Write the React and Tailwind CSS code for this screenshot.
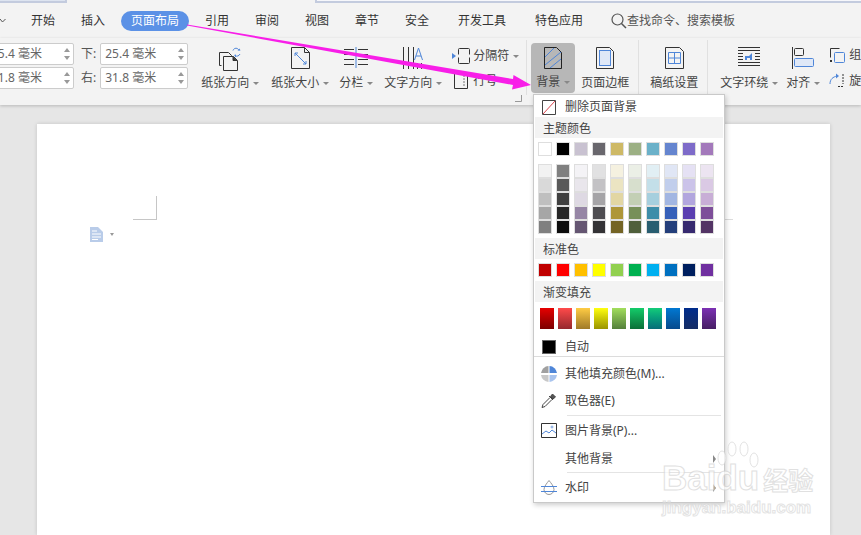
import React from "react";

const THEME = ["#ffffff", "#000000", "#c9c2d1", "#69676d", "#ceb966", "#9cb084", "#6bb1c9", "#6585cf", "#7e6bc9", "#a379bb"];
const SHADES = [
  ["#f2f2f2", "#d9d9d9", "#bfbfbf", "#a6a6a6", "#808080"],
  ["#808080", "#595959", "#404040", "#262626", "#0d0d0d"],
  ["#f4f3f6", "#e9e6ec", "#ded9e3", "#9686a5", "#655672"],
  ["#e1e1e2", "#c3c2c5", "#a5a4a7", "#4e4d51", "#343336"],
  ["#f5f1e0", "#ebe4c2", "#e2d6a3", "#ae9638", "#746425"],
  ["#ebefe6", "#d7dfcd", "#c3cfb5", "#779059", "#4f5f3b"],
  ["#e1eff4", "#c3dfe9", "#a6cfde", "#3d8da9", "#295e71"],
  ["#e0e6f5", "#c1ceec", "#a2b6e2", "#3660b9", "#243f7b"],
  ["#e5e1f4", "#cbc3e9", "#b2a6de", "#5a3eb0", "#372a70"],
  ["#ece4f1", "#dac9e4", "#c8aed6", "#7d4e99", "#533465"],
];
const STANDARD = ["#c00000", "#ff0000", "#ffc000", "#ffff00", "#92d050", "#00b050", "#00b0f0", "#0070c0", "#002060", "#7030a0"];
const GRADIENTS = [
  "from-[#e60000] to-[#7d0000]",
  "from-[#ff4a4a] to-[#96282d]",
  "from-[#ffcc44] to-[#a07a28]",
  "from-[#ffff10] to-[#9a9400]",
  "from-[#a2de5c] to-[#55803c]",
  "from-[#14cc6a] to-[#0a7038]",
  "from-[#14cc78] to-[#086c78]",
  "from-[#0078d2] to-[#064a8c]",
  "from-[#002c8c] to-[#142c64]",
  "from-[#7c30b4] to-[#461e64]",
];
const TABS = ["引用", "审阅", "视图", "章节", "安全"];

function Caret() {
  return <span className="inline-block ml-[4px] align-middle w-0 h-0 border-x-[3px] border-x-transparent border-t-[3px] border-t-[#888]" />;
}

function Spinner() {
  return (
    <span className="flex flex-col gap-[4px] mr-[3px] ml-auto">
      <span className="w-0 h-0 border-x-[3px] border-x-transparent border-b-[4px] border-b-[#999]" />
      <span className="w-0 h-0 border-x-[3px] border-x-transparent border-t-[4px] border-t-[#999]" />
    </span>
  );
}

function MarginInput({ value }) {
  return (
    <div className="w-[88px] h-[22px] bg-white border border-[#ccc] rounded-[2px] flex items-center text-[12px] text-[#666]">
      <span className="pl-[4px] whitespace-pre">{value}</span>
      <Spinner />
    </div>
  );
}

function OrientationIcon() {
  return (
    <svg width="24" height="24" viewBox="0 0 24 24" fill="none">
      <path d="M1.500 5.500h9l3 3v1" stroke="#333" />
      <path d="M1.500 5.500v13h2" stroke="#333" />
      <path d="M5.500 9.500h10l4 4v10h-14z" fill="#f3f3f3" stroke="#333" />
      <path d="M15 9.500v4h4" stroke="#333" fill="#333" />
      <path d="M15 3.500c1-3 5-3 6 0M22 7c-1 2-3 2.500-5 2" stroke="#4f86d8" />
      <path d="M19.500 3.500h3l-1-2zM16 8l2 2.500v-3z" fill="#4f86d8" />
    </svg>
  );
}

function PaperSizeIcon() {
  return (
    <svg width="19" height="22" viewBox="0 0 19 22" fill="none">
      <path d="M0.500 0.500h13l5 5v16h-18z" stroke="#333" />
      <path d="M13.500 0.500v5h5" stroke="#333" />
      <path d="M4 6l11 11M4 6h3M4 6v3M15 17h-3M15 17v-3" stroke="#4f86d8" />
    </svg>
  );
}

function ColumnsIcon() {
  return (
    <svg width="24" height="21" viewBox="0 0 24 21" fill="none">
      <path d="M0 2.500h10M0 7.500h10M0 12.500h10M0 17.500h10M14 2.500h10M14 7.500h10M14 12.500h10M14 17.500h10" stroke="#333" />
      <path d="M12 0v21" stroke="#4f86d8" />
    </svg>
  );
}

function TextDirectionIcon() {
  return (
    <svg width="21" height="22" viewBox="0 0 21 22" fill="none">
      <path d="M0.500 0v22M5.500 0v22M10.500 0v22" stroke="#333" />
      <path d="M11.500 13l4-12 4 12M13 9h5" stroke="#4f86d8" />
      <path d="M14.500 16v6M18.500 16v6" stroke="#333" />
    </svg>
  );
}

function BreakIcon() {
  return (
    <svg width="20" height="18" viewBox="0 0 20 18" fill="none">
      <path d="M7.500 7.500v-5a1 1 0 0 1 1-1h9a1 1 0 0 1 1 1v5M7.500 10.500v5a1 1 0 0 0 1 1h9a1 1 0 0 0 1-1v-5" stroke="#333" />
      <path d="M1 6v6l4-3z" fill="#4f86d8" />
    </svg>
  );
}

function LineNumberIcon() {
  return (
    <svg width="14" height="16" viewBox="0 0 14 16" fill="none">
      <path d="M0.500 0.500h13v15h-13z" stroke="#333" />
      <path d="M9 3h2M9 6h2M9 9h2M9 12h2" stroke="#777" />
    </svg>
  );
}

function BackgroundIcon() {
  return (
    <svg width="18" height="22" viewBox="0 0 18 22" fill="none">
      <path d="M0.500 0.500h12l5 5v16h-17z" fill="#b7b7b7" stroke="#222" />
      <path d="M1 10L10 1M1 18L17 5M6 21L17 12" stroke="#4f86d8" />
    </svg>
  );
}

function PageBorderIcon() {
  return (
    <svg width="18" height="22" viewBox="0 0 18 22" fill="none">
      <path d="M0.500 0.500h13l4 4v17h-17z" stroke="#333" />
      <rect x="3.500" y="3.500" width="11" height="15" fill="#dfe8f7" stroke="#4f86d8" />
    </svg>
  );
}

function ManuscriptIcon() {
  return (
    <svg width="19" height="22" viewBox="0 0 19 22" fill="none">
      <path d="M0.500 0.500h14l4 4v17h-18z" stroke="#333" />
      <path d="M3.500 5.500h12v11h-12zM3.500 11h12M9.500 5.500v11" stroke="#4f86d8" />
    </svg>
  );
}

function WrapIcon() {
  return (
    <svg width="22" height="20" viewBox="0 0 22 20" fill="none">
      <path d="M0 0.500h22M0 3.500h22M0 6.500h5M17 6.500h5M0 9.500h5M17 9.500h5M0 12.500h5M17 12.500h5M0 15.500h22M0 18.500h22" stroke="#333" />
      <path d="M7 13V9h4l3-3v7h-2v-2H9v2z" fill="#4f86d8" />
    </svg>
  );
}

function AlignIcon() {
  return (
    <svg width="22" height="22" viewBox="0 0 22 22" fill="none">
      <path d="M0.500 0v22" stroke="#333" />
      <rect x="2.500" y="1.500" width="9" height="7" rx="1" stroke="#333" />
      <rect x="2.500" y="11.500" width="19" height="8" rx="1" fill="#dfe8f7" stroke="#4f86d8" />
    </svg>
  );
}

function GroupIcon() {
  return (
    <svg width="16" height="16" viewBox="0 0 16 16" fill="none">
      <path d="M1.500 10.500v-9h9" stroke="#333" />
      <rect x="5.500" y="5.500" width="10" height="10" rx="1" stroke="#4f86d8" />
      <rect x="1" y="13" width="2" height="2" fill="#333" />
    </svg>
  );
}

function RotateIcon() {
  return (
    <svg width="16" height="16" viewBox="0 0 16 16" fill="none">
      <path d="M14 1v10M9 13.500h6" stroke="#333" strokeDasharray="2 1" />
      <path d="M1 11c0-5 3-7 7-8" stroke="#4f86d8" />
      <path d="M7 0.500l3 2.500-3 2.500z" fill="#4f86d8" />
    </svg>
  );
}

function NoFillIcon() {
  return (
    <svg width="14" height="15" viewBox="0 0 14 15" fill="none">
      <path d="M0.500 0.500h13v14h-13z" stroke="#444" />
      <path d="M1 14L13 1" stroke="#d9434e" />
    </svg>
  );
}

function PaletteIcon() {
  return (
    <svg width="16" height="16" viewBox="0 0 16 16">
      <path d="M8.500 0a8 8 0 0 1 7.500 7H8.500z" fill="#4f86d8" />
      <path d="M7.500 0v7H0a8 8 0 0 1 7.500-7z" fill="#a0a0a0" />
      <path d="M0 9h7.500v7A8 8 0 0 1 0 9z" fill="#c8c8c8" />
      <path d="M8.500 9H16a8 8 0 0 1-7.500 7z" fill="#a9c4ee" />
    </svg>
  );
}

function DropperIcon() {
  return (
    <svg width="15" height="15" viewBox="0 0 15 15" fill="none">
      <path d="M9.500 3.500l2-2.500 3 3-2.500 2z" fill="#555" stroke="#444" />
      <path d="M8 3l4 4" stroke="#444" />
      <path d="M9 4.500l-7 7-1 3 3-1 7-7" stroke="#444" />
    </svg>
  );
}

function PictureIcon() {
  return (
    <svg width="16" height="15" viewBox="0 0 16 15" fill="none">
      <path d="M0.500 0.500h15v14h-15z" stroke="#333" />
      <path d="M1 11l4-3 3 2 3-3 4 3" stroke="#4f86d8" />
      <circle cx="11" cy="4" r="1" stroke="#4f86d8" strokeWidth="0.700" />
    </svg>
  );
}

function WatermarkIcon() {
  return (
    <svg width="16" height="16" viewBox="0 0 16 16" fill="none">
      <path d="M8 0.500c-2 2.500-5 6-5 9a5 5 0 0 0 10 0c0-3-3-6.500-5-9z" stroke="#999" />
      <path d="M0 6.500h16M0 11.500h16" stroke="#4f86d8" />
    </svg>
  );
}

function RibbonButton({ label, caret, icon, className }) {
  return (
    <div className={`flex flex-col items-center justify-between h-[50px] shrink-0 pb-[2px] ${className}`}>
      <div className="h-[30px] pt-[4px] flex items-start">{icon}</div>
      <div className="text-[12px] leading-[16px] text-[#444] whitespace-nowrap">
        {label}
        {caret && <Caret />}
      </div>
    </div>
  );
}

function Swatch({ color }) {
  return <div className="h-[14px] border border-[#dedede]" style={{ background: color }} />;
}

function SectionHeader({ children }) {
  return <div className="h-[21px] mx-px bg-[#f3f3f3] pl-[8px] pt-px text-[12px] leading-[21px] text-[#444]">{children}</div>;
}

function MenuRow({ icon, label, arrow, className }) {
  return (
    <div className={`relative flex items-center text-[12px] text-[#444] ${className}`}>
      <div className="w-[29px] flex justify-center">{icon}</div>
      <span className="ml-[2px]">{label}</span>
      {arrow && (
        <span className="absolute right-[8px] top-1/2 -translate-y-1/2 w-0 h-0 border-y-[4px] border-y-transparent border-l-[3px] border-l-[#888]" />
      )}
    </div>
  );
}

function BackgroundMenu() {
  return (
    <div className="absolute z-20 left-[533px] top-[94px] w-[192px] h-[409px] bg-white border border-[#c9c9c9] shadow-[1px_2px_5px_rgba(0,0,0,0.2)]">
      <MenuRow icon={<NoFillIcon />} label="删除页面背景" className="h-[22px] pt-[2px]" />
      <SectionHeader>主题颜色</SectionHeader>
      <div className="grid grid-cols-[repeat(10,14px)] gap-x-1 pl-[4px] mt-[4px]">
        {THEME.map((c) => <Swatch key={c} color={c} />)}
      </div>
      <div className="grid grid-cols-[repeat(10,14px)] gap-x-1 pl-[4px] mt-[8px]">
        {SHADES.map((col, i) => (
          <div key={i} className="flex flex-col">
            {col.map((c, j) => <Swatch key={j} color={c} />)}
          </div>
        ))}
      </div>
      <div className="mt-[4px]">
        <SectionHeader>标准色</SectionHeader>
      </div>
      <div className="grid grid-cols-[repeat(10,14px)] gap-x-1 pl-[4px] mt-[4px]">
        {STANDARD.map((c) => <Swatch key={c} color={c} />)}
      </div>
      <div className="mt-[4px]">
        <SectionHeader>渐变填充</SectionHeader>
      </div>
      <div className="grid grid-cols-[repeat(10,14px)] gap-x-1 pl-[6px] mt-[6px]">
        {GRADIENTS.map((g) => <div key={g} className={`h-[21px] bg-linear-to-b ${g}`} />)}
      </div>
      <MenuRow
        icon={<div className="w-[14px] h-[14px] bg-black border border-[#666]" />}
        label="自动"
        className="h-[28px] pt-[8px] border-b border-[#dcdcdc]"
      />
      <MenuRow icon={<PaletteIcon />} label="其他填充颜色(M)..." className="h-[28px] mt-[3px]" />
      <MenuRow icon={<DropperIcon />} label="取色器(E)" className="h-[25px] mb-[2px]" />
      <div className="h-px ml-[33px] mr-[3px] bg-[#e4e4e4]" />
      <MenuRow icon={<PictureIcon />} label="图片背景(P)..." className="h-[29px]" />
      <MenuRow label="其他背景" arrow className="h-[27px]" />
      <div className="h-px ml-[33px] mr-[3px] bg-[#e4e4e4]" />
      <MenuRow icon={<WatermarkIcon />} label="水印" arrow className="h-[29px]" />
    </div>
  );
}

function Watermark() {
  return (
    <div className="absolute z-30 left-[660px] top-[440px] w-[190px] h-[95px] opacity-70 pointer-events-none">
      <svg className="absolute left-[56px] top-[1px]" width="44" height="34" viewBox="0 0 44 34" fill="#fff" stroke="#d8d8d8">
        <ellipse cx="6" cy="17" rx="4" ry="7" />
        <ellipse cx="16" cy="8" rx="4" ry="7" />
        <ellipse cx="28" cy="8" rx="4" ry="7" />
        <ellipse cx="38" cy="19" rx="4" ry="7" />
      </svg>
      <div className="absolute left-[2px] top-[18px] font-['Liberation_Sans',sans-serif] font-bold text-[35px] leading-[40px] text-white [-webkit-text-stroke:1px_#d4d4d4] whitespace-nowrap">
        Baidu<span className="ml-[4px] text-[25px] font-['Noto_Sans_CJK_SC',sans-serif]">经验</span>
      </div>
      <div className="absolute left-[2px] top-[58px] font-['Liberation_Sans',sans-serif] font-bold text-[17px] leading-[20px] text-white [-webkit-text-stroke:1px_#d8d8d8] whitespace-nowrap">
        jingyan.baidu.com
      </div>
    </div>
  );
}

function Arrow() {
  return (
    <svg className="absolute z-40 left-0 top-0 pointer-events-none" width="861" height="110" viewBox="0 0 861 110">
      <path d="M187 24.500L513 79L513.500 75L531 85L512 89.500L513 85L187 25.500z" fill="#f81ee8" />
    </svg>
  );
}

export default function App() {
  return (
    <div className="relative w-[861px] h-[535px] overflow-hidden flex flex-col bg-[#e6e6e6] font-['Noto_Sans','Noto_Sans_CJK_SC',sans-serif]">
      {/* top strip, bottom of the title bar boxes */}
      <div className="h-[3px] bg-[#f3f3f3] shrink-0 flex">
        <div className="w-[67px] bg-[#dde4f0] border-r-2 border-b-2 border-[#c3cbde]" />
        <div className="ml-[248px] flex-1 bg-[#f6f7fb] border-l-2 border-b-2 border-[#c3cbde]" />
      </div>

      {/* tabs */}
      <div className="h-[35px] bg-[#f3f3f3] shrink-0 flex items-center text-[12px] text-[#333]">
        <svg className="shrink-0" width="6" height="6" viewBox="0 0 6 6" fill="none">
          <path d="M0 1l2.500 3 3-3" stroke="#555" />
        </svg>
        <span className="w-[50px] text-center ml-[12px]">开始</span>
        <span className="w-[50px] text-center">插入</span>
        <span className="w-[68px] h-[20px] mx-[3px] rounded-full bg-[#5b91e6] text-white text-center leading-[20px]">页面布局</span>
        {TABS.map((t) => (
          <span key={t} className="w-[50px] text-center">{t}</span>
        ))}
        <span className="w-[70px] ml-[5px] text-center">开发工具</span>
        <span className="w-[70px] ml-[7px] text-center">特色应用</span>
        <svg className="ml-[17px] shrink-0" width="16" height="16" viewBox="0 0 16 16" fill="none">
          <circle cx="6.500" cy="6.500" r="5.500" stroke="#555" strokeWidth="1.200" />
          <path d="M10.500 10.500l4.500 4.500" stroke="#555" strokeWidth="1.500" />
        </svg>
        <span className="text-[#555]">查找命令、搜索模板</span>
      </div>

      {/* ribbon */}
      <div className="relative z-10 h-[67px] shrink-0 bg-[#f3f3f3] flex shadow-[0_1px_3px_rgba(0,0,0,0.2)] pt-[5px]">
        <div className="flex shrink-0 ml-[-14px] gap-[7px]">
          <div className="flex flex-col gap-[2px]">
            <MarginInput value="25.4 毫米" />
            <MarginInput value="31.8 毫米" />
          </div>
          <div className="flex flex-col gap-[2px] text-[12px] text-[#555] leading-[22px]">
            <div className="flex gap-[4px]"><span>下:</span><MarginInput value="25.4 毫米" /></div>
            <div className="flex gap-[4px]"><span>右:</span><MarginInput value="31.8 毫米" /></div>
          </div>
        </div>
        <RibbonButton label="纸张方向" caret icon={<OrientationIcon />} className="w-[58px] ml-[13px]" />
        <RibbonButton label="纸张大小" caret icon={<PaperSizeIcon />} className="w-[60px] ml-[11px]" />
        <RibbonButton label="分栏" caret icon={<ColumnsIcon />} className="w-[36px] ml-[8px]" />
        <RibbonButton label="文字方向" caret icon={<TextDirectionIcon />} className="w-[60px] ml-[9px]" />
        <div className="ml-[8px] w-[72px] shrink-0 flex flex-col text-[12px] text-[#444]">
          <div className="flex items-center gap-[2px] h-[24px] mt-[1px]">
            <BreakIcon />
            <span>分隔符<Caret /></span>
          </div>
          <div className="flex items-center gap-[5px] h-[24px] ml-[3px] mt-[1px]">
            <LineNumberIcon />
            <span>行号</span>
          </div>
        </div>
        <div className="w-px h-[55px] bg-[#e0e0e0] ml-[3px] mt-[-3px] shrink-0" />
        <div className="ml-[4px] w-[44px] h-[50px] shrink-0 rounded-[4px] bg-[#b7b7b7] flex flex-col items-center">
          <div className="pt-[4px] h-[30px]"><BackgroundIcon /></div>
          <div className="text-[12px] leading-[16px] mt-[1px] text-[#444] whitespace-nowrap">背景<Caret /></div>
        </div>
        <RibbonButton label="页面边框" icon={<PageBorderIcon />} className="w-[50px] ml-[5px]" />
        <div className="w-px h-[55px] bg-[#e0e0e0] ml-[8px] mt-[-3px] shrink-0" />
        <RibbonButton label="稿纸设置" icon={<ManuscriptIcon />} className="w-[50px] ml-[10px]" />
        <div className="w-px h-[55px] bg-[#e0e0e0] ml-[8px] mt-[-3px] shrink-0" />
        <RibbonButton label="文字环绕" caret icon={<WrapIcon />} className="w-[58px] ml-[12px]" />
        <RibbonButton label="对齐" caret icon={<AlignIcon />} className="w-[36px] ml-[7px]" />
        <div className="ml-[8px] shrink-0 flex flex-col text-[12px] text-[#444]">
          <div className="flex items-center gap-[4px] h-[24px]"><GroupIcon /><span>组合</span></div>
          <div className="flex items-center gap-[4px] h-[24px] mt-[2px]"><RotateIcon /><span>旋转</span></div>
        </div>
        {/* dialog launcher */}
        <svg className="absolute left-[515px] top-[57px]" width="7" height="7" viewBox="0 0 7 7" fill="none">
          <path d="M0 6.500h6.500V0" stroke="#999" />
        </svg>
      </div>

      {/* document area */}
      <div className="flex-1 min-h-0 pt-[19px] pl-[37px] pr-[31px] overflow-hidden">
        <div className="relative h-full bg-white shadow-[0_0_4px_rgba(0,0,0,0.15)]">
          {/* margin corner marks */}
          <div className="absolute left-[96px] top-[72px] w-[24px] h-[24px] border-r border-b border-[#c6c6c6]" />
          <div className="absolute left-[688px] top-[95px] w-[8px] h-px bg-[#dcdcdc]" />
          <div className="absolute left-[53px] top-[103px] flex items-center gap-[7px]">
            <svg width="13" height="15" viewBox="0 0 13 15">
              <path d="M0 0h8l5 5v10H0z" fill="#b9cce9" />
              <path d="M2 4h5M2 7h9M2 10h9M2 12.500h6" stroke="#fff" />
            </svg>
            <span className="w-0 h-0 border-x-[2.500px] border-x-transparent border-t-[3px] border-t-[#999]" />
          </div>
        </div>
      </div>

      <BackgroundMenu />
      <Watermark />
      <Arrow />
    </div>
  );
}
